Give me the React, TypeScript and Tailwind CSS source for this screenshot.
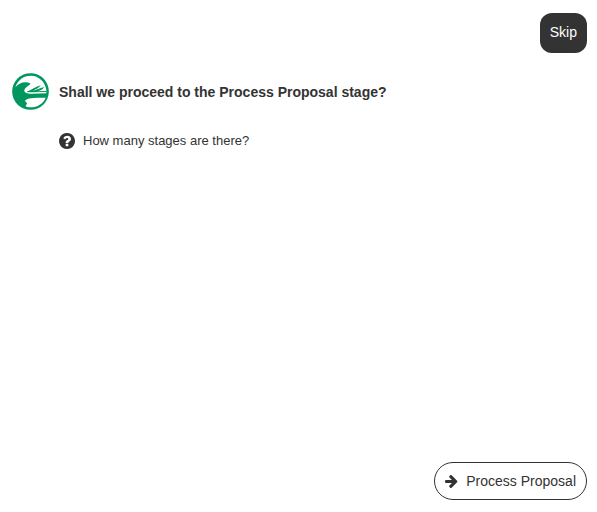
const Logo = () => {
  return (
    <svg viewBox="0 0 111 111" className="size-[37px] shrink-0" aria-hidden="true">
      <circle cx="55.5" cy="55.5" r="55" fill="#00965e" />
      <path
        d="M10 43 C16 22 34 8 56 8 C81 8 100 27 103 51 L103 61 L57 62 C43 63 36 58 37 52 C39 42 50 39 56 32 C42 25 24 26 10 43 Z"
        fill="#fff"
      />
      <path
        d="M44 56 C58 51 68 42 86 37 C81 45 72 49 63 53 C74 51 82 45 97 42 C91 51 82 54 72 55 L103 54 L103 57 L58 58 C52 58 48 58 44 56 Z"
        fill="#00965e"
      />
      <path d="M40 82 C45 75 64 74 101 74 C94 92 76 103 56 103 C47 103 41 101 41 98 C42 95 46 94 45 91 C43 88 38 87 40 82 Z" fill="#fff" />
    </svg>
  )
}

const QuestionIcon = () => {
  return (
    <svg viewBox="128 128 1536 1536" className="size-4" fill="currentColor" aria-hidden="true">
      <path d="M1024 1376v-192q0-14-9-23t-23-9h-192q-14 0-23 9t-9 23v192q0 14 9 23t23 9h192q14 0 23-9t9-23zm256-672q0-88-55.500-163t-138.500-116-170-41q-243 0-371 213-15 24 8 42l132 100q7 6 19 6 16 0 25-12 53-68 86-92 34-24 86-24 48 0 85.500 26t37.500 59q0 38-20 61t-68 45q-63 28-115.500 86.500t-52.500 125.500v36q0 14 9 23t23 9h192q14 0 23-9t9-23q0-19 21.500-49.500t54.500-49.500q32-18 49-28.500t46-35 44.500-48 28-60.500 12.500-81zm384 192q0 209-103 385.500t-279.500 279.500-385.500 103-385.500-103-279.500-279.500-103-385.500 103-385.500 279.500-279.500 385.500-103 385.500 103 279.500 279.500 103 385.500z" />
    </svg>
  )
}

const ArrowIcon = () => {
  return (
    <svg viewBox="0 64 1536 1792" className="h-[15px] w-[13px]" fill="currentColor" aria-hidden="true">
      <path d="M1472 960q0 54-37 91l-651 651q-39 37-91 37-51 0-90-37l-75-75q-38-38-38-91t38-91l293-293h-704q-52 0-84.500-37.500t-32.500-90.500v-128q0-53 32.500-90.500t84.500-37.500h704l-293-294q-38-36-38-90t38-90l75-75q38-38 90-38 53 0 91 38l651 651q37 35 37 90z" />
    </svg>
  )
}

const App = () => {
  return (
    <div className="flex min-h-screen flex-col bg-white py-3 pr-2.5 pl-3 font-['Liberation_Sans',Arial,sans-serif] text-sm text-[#333]">
      <header className="flex justify-end">
        <button type="button" className="mt-px h-10 rounded-xl bg-[#333] px-2.5 pb-0.5 text-white">
          Skip
        </button>
      </header>
      <main className="mt-5 flex grow items-start gap-2.5">
        <Logo />
        <div>
          <h1 className="leading-[38px] font-bold">Shall we proceed to the Process Proposal stage?</h1>
          <button type="button" className="mt-5 flex items-center gap-2 text-[13px] leading-5">
            <QuestionIcon />
            How many stages are there?
          </button>
        </div>
      </main>
      <footer className="flex justify-end">
        <button type="button" className="flex h-[38px] items-center gap-2 rounded-full border border-[#333] px-2.5">
          <ArrowIcon />
          Process Proposal
        </button>
      </footer>
    </div>
  )
}

export default App
